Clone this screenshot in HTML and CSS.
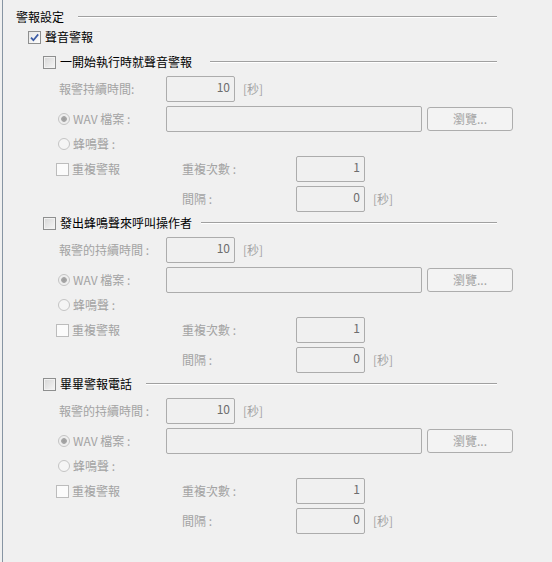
FILE: index.html
```html
<!DOCTYPE html>
<html lang="zh-Hant">
<head>
  <meta charset="UTF-8"/>
  <title>警報設定</title>
  <link rel="stylesheet" href="styles.css">
</head>
<body>
  <div class="panel">

    <!-- Group title -->
    <div class="group-title">
      <span>警報設定</span>
      <span class="rule"></span>
    </div>

    <div class="main-check">
      <span class="box checked">
        <svg viewBox="0 0 11 11" width="11" height="11"><path d="M2 5.6 L4.4 8.2 L9.2 2.4" fill="none" stroke="#3b5ba5" stroke-width="1.7"/></svg>
      </span>
      <span>聲音警報</span>
    </div>

    <!-- Section 1 -->
    <section class="alarm">
      <div class="alarm-head">
        <span class="box"></span>
        <span class="head-text gap-wide">一開始執行時就聲音警報</span>
        <span class="rule"></span>
      </div>
      <div class="row r-dur">
        <span class="lbl-col dim dur-lbl">報警持續時間:</span>
        <span class="field short">10</span>
        <span class="unit">[秒]</span>
      </div>
      <div class="row r-wav">
        <span class="lbl-col dim"><span class="radio on"></span>WAV 檔案 :</span>
        <span class="field long"></span>
        <span class="btn">瀏覽...</span>
      </div>
      <div class="row r-beep">
        <span class="lbl-col dim"><span class="radio"></span>蜂鳴聲 :</span>
      </div>
      <div class="row r-rep">
        <span class="rep-col dim"><span class="box off"></span>重複警報</span>
        <span class="sub-lbl dim">重複次數 :</span>
        <span class="field short">1</span>
      </div>
      <div class="row r-int">
        <span class="rep-col"></span>
        <span class="sub-lbl dim">間隔 :</span>
        <span class="field short">0</span>
        <span class="unit">[秒]</span>
      </div>
    </section>

    <!-- Section 2 -->
    <section class="alarm">
      <div class="alarm-head">
        <span class="box"></span>
        <span class="head-text gap-narrow">發出蜂鳴聲來呼叫操作者</span>
        <span class="rule"></span>
      </div>
      <div class="row r-dur">
        <span class="lbl-col dim dur-lbl">報警的持續時間 :</span>
        <span class="field short">10</span>
        <span class="unit">[秒]</span>
      </div>
      <div class="row r-wav">
        <span class="lbl-col dim"><span class="radio on"></span>WAV 檔案 :</span>
        <span class="field long"></span>
        <span class="btn">瀏覽...</span>
      </div>
      <div class="row r-beep">
        <span class="lbl-col dim"><span class="radio"></span>蜂鳴聲 :</span>
      </div>
      <div class="row r-rep">
        <span class="rep-col dim"><span class="box off"></span>重複警報</span>
        <span class="sub-lbl dim">重複次數 :</span>
        <span class="field short">1</span>
      </div>
      <div class="row r-int">
        <span class="rep-col"></span>
        <span class="sub-lbl dim">間隔 :</span>
        <span class="field short">0</span>
        <span class="unit">[秒]</span>
      </div>
    </section>

    <!-- Section 3 -->
    <section class="alarm">
      <div class="alarm-head">
        <span class="box"></span>
        <span class="head-text">畢畢警報電話</span>
        <span class="rule"></span>
      </div>
      <div class="row r-dur">
        <span class="lbl-col dim dur-lbl">報警的持續時間 :</span>
        <span class="field short">10</span>
        <span class="unit">[秒]</span>
      </div>
      <div class="row r-wav">
        <span class="lbl-col dim"><span class="radio on"></span>WAV 檔案 :</span>
        <span class="field long"></span>
        <span class="btn">瀏覽...</span>
      </div>
      <div class="row r-beep">
        <span class="lbl-col dim"><span class="radio"></span>蜂鳴聲 :</span>
      </div>
      <div class="row r-rep">
        <span class="rep-col dim"><span class="box off"></span>重複警報</span>
        <span class="sub-lbl dim">重複次數 :</span>
        <span class="field short">1</span>
      </div>
      <div class="row r-int">
        <span class="rep-col"></span>
        <span class="sub-lbl dim">間隔 :</span>
        <span class="field short">0</span>
        <span class="unit">[秒]</span>
      </div>
    </section>

  </div>
</body>
</html>
```

FILE: styles.css
```css
* {
  box-sizing: border-box;
}

body {
  margin: 0;
  background-color: #f0f0f0;
  font-family: "Noto Sans CJK TC", "Noto Sans", sans-serif;
  font-size: 12px;
  line-height: 16px;
  color: #000;
}

.panel {
  margin-left: 2px;
  border-left: 1px solid #8795a3;
  height: 562px;
  padding: 6px 55px 0 13px;
}

.group-title {
  display: flex;
  align-items: center;
  height: 22px;
  gap: 14px;
}

.rule {
  flex: 1;
  height: 2px;
  border-top: 1px solid #a0a0a0;
  border-bottom: 1px solid #fff;
}

.main-check {
  display: flex;
  align-items: center;
  gap: 4px;
  height: 18px;
  margin: 0 0 5px 12px;
}

/* check boxes */
.box {
  flex: none;
  width: 13px;
  height: 13px;
  border: 1px solid #8e8f8f;
  background: linear-gradient(135deg, #d6d6d6, #f6f6f6);
  box-shadow: inset 0 0 0 1px #f2f2f2;
  display: flex;
  align-items: center;
  justify-content: center;
}

.box.checked {
  background: linear-gradient(135deg, #e6e6e6, #fdfdfd);
  box-shadow: none;
}

.box.off {
  border-color: #bcbcbc;
  background: #fbfbfb;
  box-shadow: none;
}

/* radio buttons */
.radio {
  flex: none;
  width: 12px;
  height: 12px;
  margin: 0 3px 0 2px;
  border-radius: 50%;
  border: 1px solid #c4c4c4;
  background: #f5f5f5;
}

.radio.on {
  background: radial-gradient(circle, #9c9c9c 0, #a8a8a8 2.5px, #ececec 3.2px, #f5f5f5 100%);
}

/* sections */
.alarm {
  height: 161px;
}

.alarm-head {
  display: flex;
  align-items: center;
  height: 22px;
  margin-left: 27px;
}

.head-text {
  margin: 0 14px 0 4px;
}

.head-text.gap-wide {
  margin-right: 18px;
}

.head-text.gap-narrow {
  margin-right: 9px;
}

.row {
  display: flex;
  align-items: center;
  height: 26px;
  margin-left: 40px;
}

.r-dur {
  margin-top: 3px;
}

.r-wav,
.r-int {
  margin-top: 4px;
}

.r-beep {
  height: 24px;
}

.dim {
  color: #a3a3a3;
}

.lbl-col {
  flex: none;
  width: 110px;
  display: flex;
  align-items: center;
}

.dur-lbl {
  padding-left: 3px;
}

.rep-col {
  flex: none;
  width: 126px;
  display: flex;
  align-items: center;
  gap: 3px;
}

.sub-lbl {
  flex: none;
  width: 114px;
}

.field {
  flex: none;
  height: 26px;
  border: 1px solid #acacac;
  border-radius: 2px;
  background-color: #f0f0f0;
  text-align: right;
  padding-right: 4px;
  line-height: 20px;
  color: #6d6d6d;
}

.short {
  width: 69px;
}

.long {
  width: 256px;
}

.unit {
  margin-left: 8px;
  color: #a3a3a3;
}

.btn {
  flex: none;
  width: 86px;
  height: 24px;
  margin-left: 5px;
  border: 1px solid #adadad;
  border-radius: 3px;
  background-color: #f3f3f3;
  color: #a3a3a3;
  text-align: center;
  line-height: 21px;
}
```
